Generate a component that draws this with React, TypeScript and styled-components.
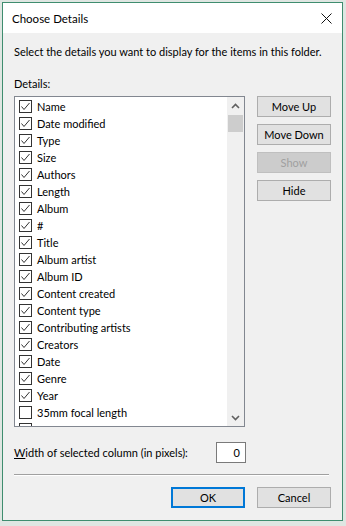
import styled, { createGlobalStyle } from "styled-components";

const GlobalStyle = createGlobalStyle`
  body {
    margin: 0;
    background: #dfe6e2;
    font-family: Lato, "Noto Sans", sans-serif;
    font-size: 11px;
    color: #000;
  }
`;

const Frame = styled.div`
  width: 339px;
  height: 517px;
  margin: 2px 0 0 2px;
  border: 1px solid #3f8d6f;
  background: #f0f0f0;
  display: flex;
  flex-direction: column;
`;

const TitleBar = styled.div`
  height: 30px;
  background: #fff;
  display: flex;
  align-items: center;
  justify-content: space-between;
  padding: 0 10px 0 9px;
  font-size: 11.5px;
`;

const Body = styled.div`
  flex: 1;
  display: flex;
  flex-direction: column;
  padding: 11px 11px 0 11px;
`;

const Text = styled.div<{ $top?: number }>`
  line-height: 16px;
  margin-top: ${(p) => p.$top ?? 0}px;
  white-space: nowrap;
`;

const Main = styled.div`
  display: flex;
  gap: 12px;
  margin-top: 4px;
`;

const ListBox = styled.div`
  width: 230px;
  height: 329px;
  border: 1px solid #828790;
  background: #fff;
  display: flex;
  overflow: hidden;
`;

const Items = styled.div`
  flex: 1;
  padding: 1px 0 0 4px;
  overflow: hidden;
`;

const Row = styled.div`
  height: 17px;
  display: flex;
  align-items: center;
  gap: 5px;
  white-space: nowrap;
`;

const Box = styled.span`
  width: 13px;
  height: 13px;
  box-sizing: border-box;
  border: 1px solid #333;
  background: #fff;
  display: flex;
  align-items: center;
  justify-content: center;
  flex-shrink: 0;
`;

const ScrollBar = styled.div`
  width: 17px;
  background: #f0f0f0;
  display: flex;
  flex-direction: column;
`;

const Arrow = styled.div`
  height: 17px;
  display: flex;
  align-items: center;
  justify-content: center;
`;

const Track = styled.div`
  flex: 1;
  padding: 1px 1px 0 1px;
`;

const Thumb = styled.div`
  height: 17px;
  background: #cdcdcd;
`;

const Side = styled.div`
  display: flex;
  flex-direction: column;
  gap: 7px;
`;

const Button = styled.button<{ $default?: boolean }>`
  width: 74px;
  height: 21px;
  box-sizing: border-box;
  padding: 0;
  font-family: inherit;
  font-size: 11px;
  color: #000;
  background: #e1e1e1;
  border: ${(p) => (p.$default ? "2px solid #0078d7" : "1px solid #adadad")};
  &:disabled {
    background: #cccccc;
    border-color: #bfbfbf;
    color: #a0a0a0;
  }
`;

const WidthRow = styled.div`
  width: 232px;
  margin-top: 15px;
  display: flex;
  align-items: center;
  justify-content: space-between;
  white-space: nowrap;
`;

const Field = styled.div`
  width: 30px;
  height: 21px;
  box-sizing: border-box;
  border: 1px solid #7a7a7a;
  background: #fff;
  display: flex;
  align-items: center;
  justify-content: flex-end;
  padding-right: 5px;
`;

const Separator = styled.div`
  margin: 11px 2px 0 0;
  border-top: 1px solid #a0a0a0;
  border-bottom: 1px solid #fff;
`;

const Footer = styled.div`
  display: flex;
  justify-content: flex-end;
  gap: 12px;
  margin-top: 11px;
`;

const details: [string, boolean][] = [
  ["Name", true],
  ["Date modified", true],
  ["Type", true],
  ["Size", true],
  ["Authors", true],
  ["Length", true],
  ["Album", true],
  ["#", true],
  ["Title", true],
  ["Album artist", true],
  ["Album ID", true],
  ["Content created", true],
  ["Content type", true],
  ["Contributing artists", true],
  ["Creators", true],
  ["Date", true],
  ["Genre", true],
  ["Year", true],
  ["35mm focal length", false],
  ["Account name", false],
];

function Check() {
  return (
    <svg width="11" height="11" viewBox="0 0 11 11">
      <polyline points="1.5,5.5 4,8.5 9.5,2" fill="none" stroke="#333" strokeWidth="1" />
    </svg>
  );
}

function Chevron({ up }: { up?: boolean }) {
  return (
    <svg width="9" height="6" viewBox="0 0 9 6">
      <polyline
        points={up ? "1,5 4.5,1.5 8,5" : "1,1 4.5,4.5 8,1"}
        fill="none"
        stroke="#606060"
        strokeWidth="1.6"
      />
    </svg>
  );
}

function App() {
  return (
    <>
      <GlobalStyle />
      <Frame>
        <TitleBar>
          <span>Choose Details</span>
          <svg width="11" height="11" viewBox="0 0 11 11">
            <path d="M0.5 0.5 L10.5 10.5 M10.5 0.5 L0.5 10.5" stroke="#111" strokeWidth="1" />
          </svg>
        </TitleBar>
        <Body>
          <Text>Select the details you want to display for the items in this folder.</Text>
          <Text $top={16}>Details:</Text>
          <Main>
            <ListBox>
              <Items>
                {details.map(([name, on], i) => (
                  <Row key={i}>
                    <Box>{on && <Check />}</Box>
                    {name}
                  </Row>
                ))}
              </Items>
              <ScrollBar>
                <Arrow>
                  <Chevron up />
                </Arrow>
                <Track>
                  <Thumb />
                </Track>
                <Arrow>
                  <Chevron />
                </Arrow>
              </ScrollBar>
            </ListBox>
            <Side>
              <Button>Move Up</Button>
              <Button>Move Down</Button>
              <Button disabled>Show</Button>
              <Button>Hide</Button>
            </Side>
          </Main>
          <WidthRow>
            <span>
              <u>W</u>idth of selected column (in pixels):
            </span>
            <Field>0</Field>
          </WidthRow>
          <Separator />
          <Footer>
            <Button $default>OK</Button>
            <Button>Cancel</Button>
          </Footer>
        </Body>
      </Frame>
    </>
  );
}

export default App;
